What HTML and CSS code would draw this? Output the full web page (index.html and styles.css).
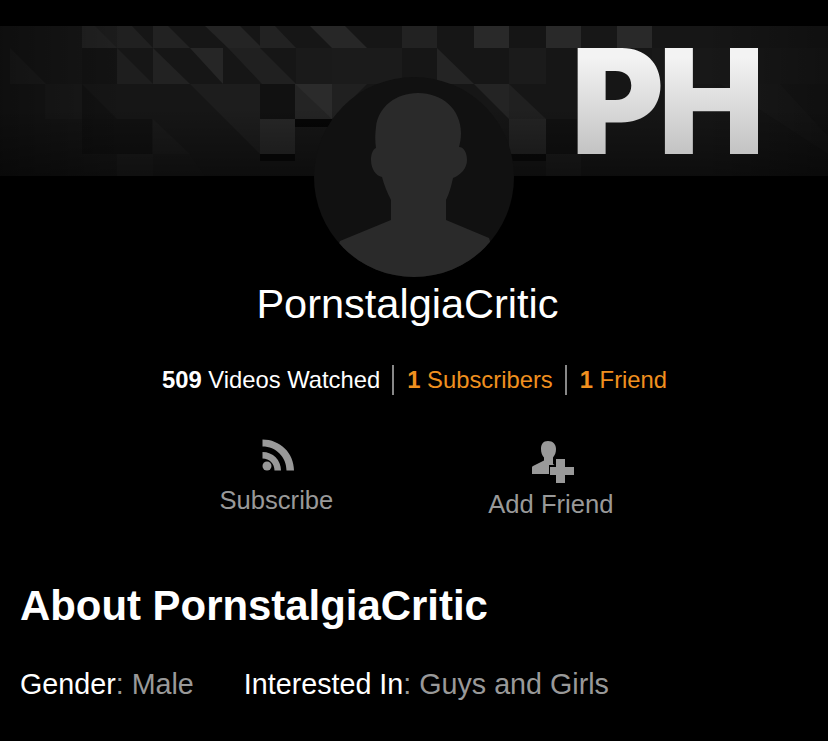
FILE: index.html
```html
<!DOCTYPE html>
<html lang="en">
<head>
    <meta charset="UTF-8">
    <meta name="viewport" content="width=device-width, initial-scale=1.0">
    <title>PornstalgiaCritic</title>
    <link rel="stylesheet" href="styles.css">
</head>
<body>

    <div class="cover">
        <svg class="cover-pattern" viewBox="0 0 828 150" width="828" height="150">
            <rect width="828" height="150" fill="#161616"/>
            <!-- row 1 -->
            <polygon points="82,0 117,0 117,22 82,22" fill="#1c1c1c"/>
            <polygon points="82,0 95,0 117,22 82,22" fill="#212121"/>
            <polygon points="117,0 132,0 153,22 117,22" fill="#202020"/>
            <polygon points="153,0 168,0 190,22 153,22" fill="#222"/>
            <polygon points="205,0 240,0 262,22 228,22" fill="#242424"/>
            <polygon points="260,0 275,0 296,22 260,22" fill="#222"/>
            <polygon points="310,0 345,0 367,22 332,22" fill="#272727"/>
            <rect x="402" y="0" width="35" height="22" fill="#222"/>
            <rect x="474" y="0" width="35" height="22" fill="#292929"/>
            <rect x="509" y="0" width="37" height="22" fill="#151515"/>
            <rect x="546" y="0" width="35" height="22" fill="#292929"/>
            <rect x="581" y="0" width="36" height="22" fill="#171717"/>
            <rect x="617" y="0" width="35" height="22" fill="#292929"/>
            <!-- row 2 -->
            <polygon points="10,22 46,58 10,58" fill="#1c1c1c"/>
            <rect x="82" y="22" width="35" height="36" fill="#131313"/>
            <polygon points="117,22 153,58 117,58" fill="#1e1e1e"/>
            <polygon points="153,22 190,58 153,58" fill="#222"/>
            <polygon points="190,22 223,22 223,58" fill="#262626"/>
            <polygon points="228,22 260,22 296,58 262,58" fill="#202020"/>
            <rect x="296" y="22" width="36" height="36" fill="#1a1a1a"/>
            <rect x="332" y="22" width="70" height="36" fill="#1b1b1b"/>
            <polygon points="437,22 474,58 437,58" fill="#242424"/>
            <rect x="509" y="22" width="37" height="36" fill="#1b1b1b"/>
            <rect x="652" y="22" width="176" height="36" fill="#181818"/>
            <!-- row 3 -->
            <polygon points="45,58 82,58 82,93 45,93" fill="#191919"/>
            <polygon points="82,58 117,93 82,93" fill="#121212"/>
            <polygon points="190,58 260,58 260,128" fill="#1d1d1d"/>
            <rect x="260" y="58" width="35" height="35" fill="#111"/>
            <rect x="295" y="58" width="37" height="35" fill="#242424"/>
            <polygon points="295,58 332,58 332,93" fill="#2b2b2b"/>
            <polygon points="332,58 367,58 332,93" fill="#202020"/>
            <polygon points="474,58 509,58 509,93" fill="#242424"/>
            <polygon points="509,58 546,93 509,93" fill="#202020"/>
            <polygon points="720,58 780,58 828,110 828,128" fill="#191919"/>
            <!-- row 4 -->
            <rect x="82" y="93" width="70" height="35" fill="#111"/>
            <polygon points="153,93 190,128 153,128" fill="#1a1a1a"/>
            <rect x="260" y="93" width="35" height="35" fill="#272727"/>
            <rect x="509" y="93" width="37" height="35" fill="#242424"/>
            <rect x="546" y="93" width="31" height="35" fill="#111"/>
            <rect x="295" y="93" width="37" height="8" fill="#060606"/>
            <rect x="260" y="128" width="35" height="7" fill="#080808"/>
            <rect x="509" y="128" width="37" height="7" fill="#0a0a0a"/>
            <!-- row 5 -->
            <rect x="117" y="128" width="36" height="22" fill="#1a1a1a"/>
            <polygon points="153,128 190,128 205,150 153,150" fill="#171717"/>
            <rect x="546" y="128" width="35" height="22" fill="#1b1b1b"/>
        </svg>
        <div class="cover-logo">PH</div>
    </div>

    <div class="profile">
        <svg class="avatar" viewBox="0 0 200 200" width="200" height="200">
            <defs>
                <clipPath id="avatar-clip"><circle cx="100" cy="100" r="100"/></clipPath>
            </defs>
            <circle cx="100" cy="100" r="100" fill="#111"/>
            <path clip-path="url(#avatar-clip)" fill="#2a2a2a" d="M104 16C128 16 147 32 147 56C147 62 146 66 145 70C150 70 153 76 153 83C153 91 147 98 139 101C137 110 135 117 132 123V143L175 161L190 210H10L26 164L77 143V123C73 115 70 108 68 100C62 99 57 92 57 83C57 77 59 72 62 71C61 64 61 58 62 50C64 30 82 16 104 16z"/>
        </svg>

        <h1 class="username">PornstalgiaCritic</h1>

        <div class="stats">
            <span class="stat"><b>509</b> Videos Watched</span>
            <span class="stat stat-link"><b>1</b> Subscribers</span>
            <span class="stat stat-link"><b>1</b> Friend</span>
        </div>

        <div class="actions">
            <a class="action action-subscribe">
                <svg viewBox="0 0 32 32" width="32" height="32">
                    <circle cx="5" cy="27" r="4.500" fill="#999"/>
                    <path fill="#999" d="M.5 13v6.500C7.500 19.500 12.500 24.500 12.500 31.500H19C19 21 11 13 .5 13z"/>
                    <path fill="#999" d="M.5 .5v7C14 7.500 24.500 18 24.500 31.500H32C32 14 18 .5 .5 .5z"/>
                </svg>
                <span>Subscribe</span>
            </a>
            <a class="action action-friend">
                <svg viewBox="0 0 42 42" width="42" height="42">
                    <path fill="#999" d="M16 0C11 0 9 3.500 9 8c0 3.500 1 6.500 3 8.500v3L1 25c-1 .5-1 1-1 2v6h17v-9h5.500l-1.500-1v-6.500C23 14 24 11.500 24 8 24 3.500 21 0 16 0z"/>
                    <path fill="#999" d="M24 18h9v8h9v8h-9v8h-9v-8h-6v-8h6z"/>
                </svg>
                <span>Add Friend</span>
            </a>
        </div>
    </div>

    <div class="about">
        <h2>About PornstalgiaCritic</h2>
        <div class="about-info">
            <div><span class="about-key">Gender</span>: Male</div>
            <div><span class="about-key">Interested In</span>: Guys and Girls</div>
        </div>
    </div>

</body>
</html>
```

FILE: styles.css
```css
body {
    margin: 0;
    background-color: #000;
    color: #fff;
    font-family: "Liberation Sans", Arial, sans-serif;
    overflow: hidden;
}
.cover {
    position: relative;
    height: 150px;
    margin-top: 26px;
}
.cover-pattern {
    display: block;
    filter: blur(0.7px);
}
.cover::after {
    content: "";
    position: absolute;
    top: 0;
    left: 0;
    right: 0;
    bottom: 0;
    background:
        linear-gradient(rgba(0,0,0,0) 55%, rgba(0,0,0,0.4)),
        linear-gradient(90deg, rgba(0,0,0,0.35), rgba(0,0,0,0) 15%, rgba(0,0,0,0) 85%, rgba(0,0,0,0.3));
}
.cover-logo {
    position: absolute;
    left: 571px;
    top: 2px;
    z-index: 1;
    padding-right: 12px;
    font-family: Inter, "Liberation Sans", sans-serif;
    font-weight: 900;
    font-size: 146px;
    line-height: 146px;
    letter-spacing: -6px;
    transform: scaleX(0.972);
    transform-origin: left center;
    background: linear-gradient(#f3f3f3 20%, #c4c4c4 85%);
    -webkit-background-clip: text;
    background-clip: text;
    color: transparent;
}
.profile {
    display: flex;
    flex-direction: column;
    align-items: center;
    margin-top: -99px;
    position: relative;
    z-index: 2;
}
.avatar {
    display: block;
}
.username {
    margin: 4px 13px 0 0;
    font-size: 41.500px;
    line-height: 46px;
    font-weight: normal;
}
.stats {
    display: flex;
    align-items: center;
    margin-top: 38px;
    font-size: 23.800px;
    line-height: 30px;
}
.stat {
    padding: 0 12px 0 13px;
    border-left: 2px solid #888;
}
.stat:first-child {
    border-left: none;
}
.stat-link {
    color: #f0901f;
}
.actions {
    display: flex;
    justify-content: center;
    align-items: flex-start;
    gap: 155px;
    margin-top: 44px;
    padding-left: 5px;
    color: #999;
    font-size: 25.600px;
}
.action {
    display: flex;
    flex-direction: column;
    align-items: center;
    gap: 15px;
}
.action svg {
    margin-left: 4px;
}
.action-friend {
    gap: 7px;
    padding-top: 2px;
}
.about {
    padding: 0 20px;
    margin-top: 64px;
}
.about h2 {
    margin: 0;
    font-size: 41.900px;
    line-height: 46px;
}
.about-info {
    display: flex;
    gap: 50px;
    margin-top: 38px;
    color: #999;
    font-size: 28.700px;
    line-height: 34px;
}
.about-key {
    color: #fff;
}
```
